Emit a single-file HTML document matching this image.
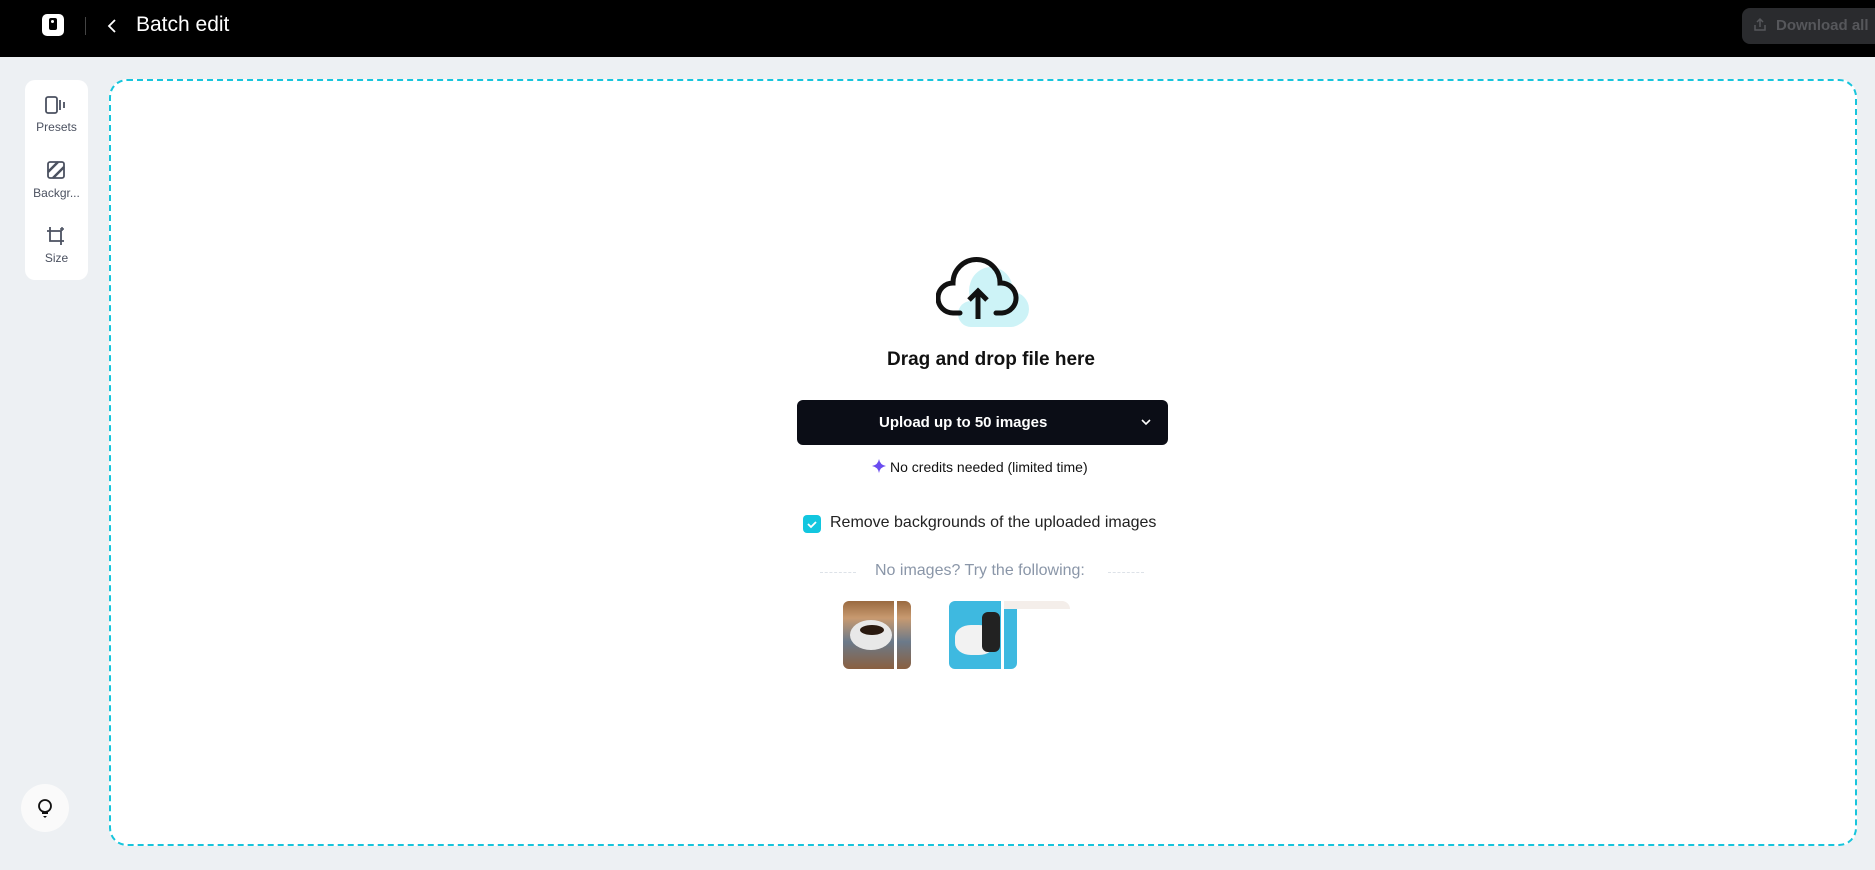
<!DOCTYPE html>
<html><head><style>
*{box-sizing:border-box;margin:0;padding:0}
body{width:1875px;height:870px;background:#edf0f3;font-family:"Liberation Sans",sans-serif;position:relative;overflow:hidden}
.hdr{position:absolute;left:0;top:0;width:1875px;height:57px;background:#000}
.abs{position:absolute}
</style></head><body>
<div class="hdr">
  <div class="abs" style="left:42px;top:14px;width:22px;height:22px;background:#fff;border-radius:5px"></div>
  <div class="abs" style="left:49px;top:18px;width:8px;height:12px;background:#000;border-radius:2px"></div>
  <div class="abs" style="left:51px;top:20px;width:3px;height:3px;background:#fff;border-radius:50%"></div>
  <div class="abs" style="left:85px;top:17px;width:1px;height:18px;background:#444"></div>
  <svg class="abs" style="left:106px;top:17px" width="12" height="18"><path d="M9 3L3 9l6 6" stroke="#fff" stroke-width="1.8" fill="none"/></svg>
  <div class="abs" style="left:136px;top:13px;color:#fff;font-size:21px">Batch edit</div>
  <div class="abs" style="left:1742px;top:8px;width:140px;height:36px;background:#2a2b2e;border-radius:8px;color:#56575b;font-size:15px;font-weight:bold;line-height:36px;padding-left:34px">Download all</div>
  <svg class="abs" style="left:1752px;top:17px" width="16" height="16"><path d="M8 2v8M5 5l3-3 3 3M3 8v5h10V8" stroke="#56575b" stroke-width="1.5" fill="none"/></svg>
</div>
<div class="abs" style="left:25px;top:80px;width:63px;height:200px;background:#fff;border-radius:10px"></div>
<svg class="abs" style="left:45px;top:96px" width="22" height="18"><rect x="1" y="1" width="11" height="16" rx="2" stroke="#4b5160" stroke-width="1.8" fill="none"/><path d="M15 4v10M19 6v6" stroke="#4b5160" stroke-width="1.8"/></svg>
<div class="abs" style="left:25px;top:120px;width:63px;text-align:center;font-size:12px;color:#4b5160">Presets</div>
<svg class="abs" style="left:47px;top:161px" width="18" height="18"><rect x="1" y="1" width="16" height="16" rx="2" stroke="#4b5160" stroke-width="1.8" fill="none"/><path d="M1 11L11 1M6 17L17 6" stroke="#4b5160" stroke-width="2.5"/></svg>
<div class="abs" style="left:25px;top:186px;width:63px;text-align:center;font-size:12px;color:#4b5160">Backgr...</div>
<svg class="abs" style="left:46px;top:226px" width="20" height="20"><path d="M4 1v14h14M1 5h14v14" stroke="#4b5160" stroke-width="1.8" fill="none"/><path d="M16 1v4M14 3h4" stroke="#4b5160" stroke-width="1.5"/></svg>
<div class="abs" style="left:25px;top:251px;width:63px;text-align:center;font-size:12px;color:#4b5160">Size</div>
<div class="abs" style="left:21px;top:784px;width:48px;height:48px;background:#fafafa;border-radius:50%"></div>
<svg class="abs" style="left:35px;top:797px" width="20" height="24"><circle cx="10" cy="9" r="6" stroke="#111" stroke-width="1.8" fill="none"/><path d="M7 15h6v2H7zM8 19h4l-2 2z" fill="#111"/></svg>
<div class="abs" style="left:109px;top:79px;width:1748px;height:767px;background:#fff;border:2px dashed #17c5dc;border-radius:18px"></div>
<svg class="abs" style="left:936px;top:255px" width="96" height="76"><ellipse cx="55" cy="36" rx="22" ry="24" fill="#cdf3f7"/><ellipse cx="76" cy="54" rx="17" ry="17" fill="#cdf3f7"/><rect x="22" y="46" width="66" height="26" rx="13" fill="#cdf3f7"/><path d="M24 58H17A15 15 0 0 1 17 28A23.5 23.5 0 0 1 64 28A15 15 0 0 1 66 58H60" stroke="#111" stroke-width="5" fill="none" stroke-linecap="round"/><path d="M42 64V36M33 45l9-9 9 9" stroke="#111" stroke-width="5" fill="none"/></svg>
<div class="abs" style="left:780px;top:349px;width:422px;text-align:center;font-size:19px;font-weight:bold;color:#111">Drag and drop file here</div>
<div class="abs" style="left:797px;top:400px;width:371px;height:45px;background:#0b0d16;border-radius:6px;color:#fff;font-size:15px;font-weight:bold;line-height:45px;padding-left:82px">Upload up to 50 images</div>
<svg class="abs" style="left:1140px;top:417px" width="12" height="10"><path d="M2 3l4 4 4-4" stroke="#fff" stroke-width="1.6" fill="none"/></svg>
<svg class="abs" style="left:872px;top:459px" width="14" height="14"><path d="M7 0Q8 6 14 7Q8 8 7 14Q6 8 0 7Q6 6 7 0Z" fill="#6a4cf0"/></svg>
<div class="abs" style="left:890px;top:459px;font-size:14px;color:#111">No credits needed (limited time)</div>
<div class="abs" style="left:803px;top:515px;width:18px;height:18px;background:#12c6df;border-radius:4px"></div>
<svg class="abs" style="left:803px;top:515px" width="18" height="18"><path d="M5 9l3 3 5-5" stroke="#fff" stroke-width="1.8" fill="none"/></svg>
<div class="abs" style="left:830px;top:514px;font-size:16px;color:#222">Remove backgrounds of the uploaded images</div>
<div class="abs" style="left:820px;top:572px;width:36px;border-top:1px dashed #dde2e8"></div>
<div class="abs" style="left:1108px;top:572px;width:36px;border-top:1px dashed #dde2e8"></div>
<div class="abs" style="left:875px;top:562px;font-size:16px;color:#8a96a8">No images? Try the following:</div>
<div class="abs" style="left:843px;top:601px;width:68px;height:68px;border-radius:6px;background:linear-gradient(180deg,#9a6a40 0%,#c89a70 25%,#6b7a8a 60%,#8a6040 100%)"></div>
<div class="abs" style="left:850px;top:620px;width:42px;height:30px;border-radius:50%;background:#e8e8e8"></div>
<div class="abs" style="left:860px;top:625px;width:24px;height:10px;border-radius:50%;background:#2a1a10"></div>
<div class="abs" style="left:894px;top:601px;width:3px;height:68px;background:#fff"></div>
<div class="abs" style="left:949px;top:601px;width:68px;height:68px;border-radius:6px;background:#3eb9e0"></div>
<div class="abs" style="left:955px;top:625px;width:40px;height:30px;border-radius:40%;background:#f2f2f2"></div>
<div class="abs" style="left:982px;top:612px;width:18px;height:40px;border-radius:6px;background:#222"></div>
<div class="abs" style="left:1001px;top:601px;width:3px;height:68px;background:#fff"></div>
<div class="abs" style="left:1004px;top:601px;width:66px;height:8px;background:#f4eeea;border-radius:0 8px 0 0"></div>
</body></html>
